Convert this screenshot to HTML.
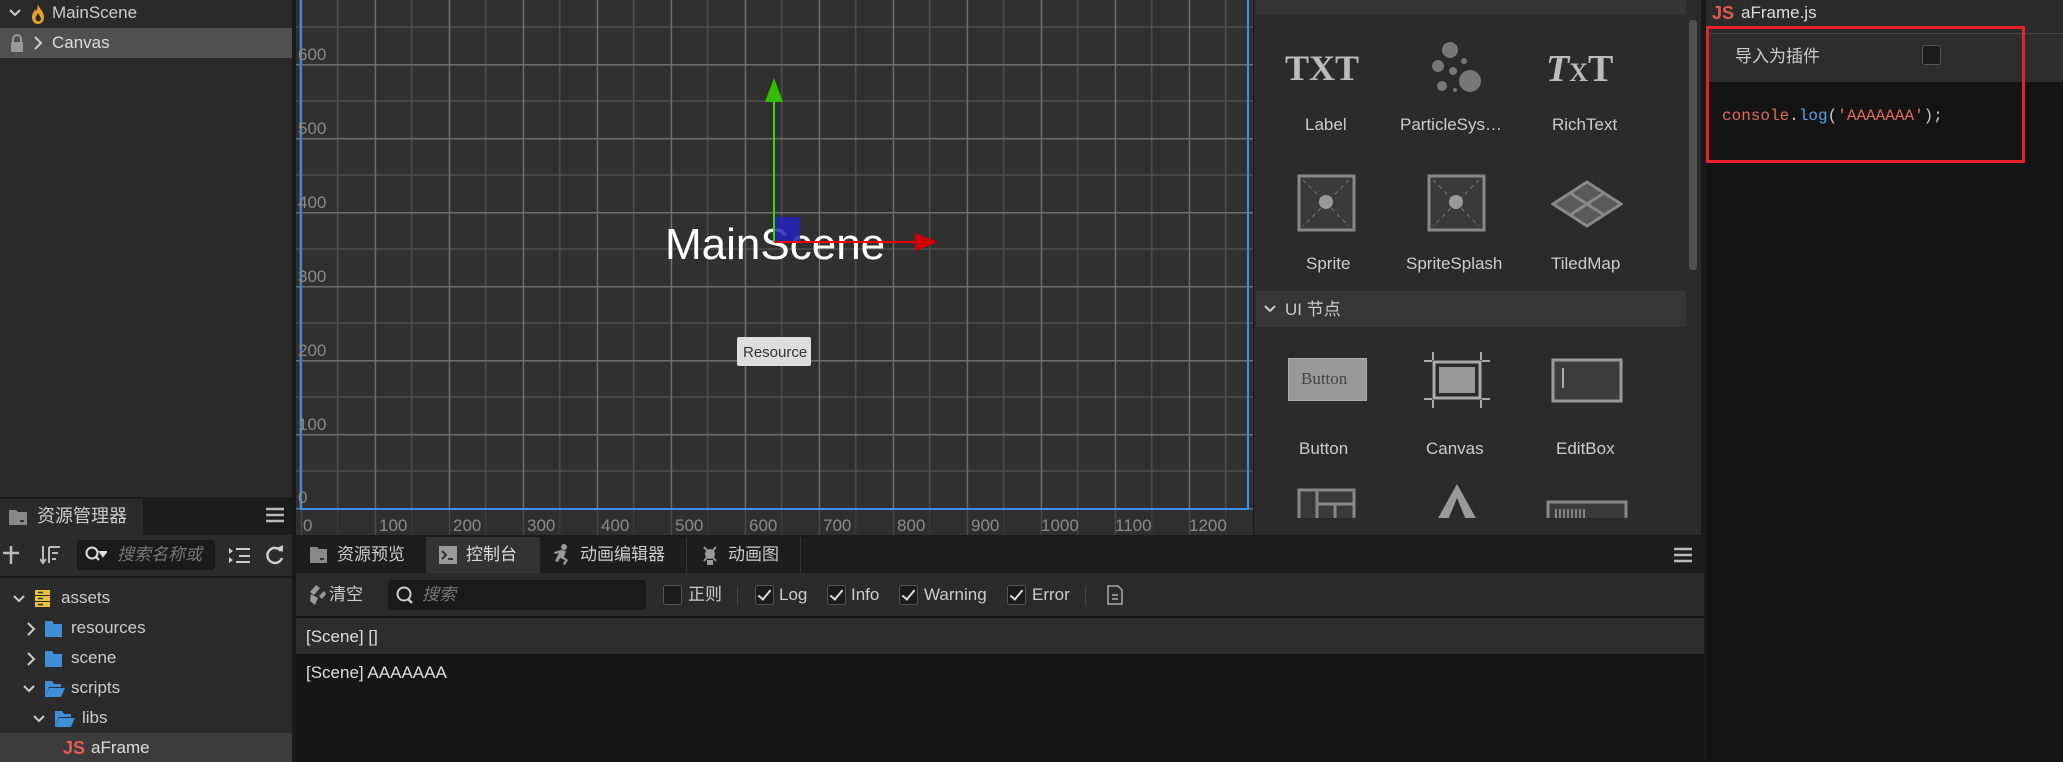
<!DOCTYPE html>
<html><head><meta charset="utf-8">
<style>
*{margin:0;padding:0;box-sizing:border-box}
body{width:2063px;height:762px;overflow:hidden;background:#1a1a1a;font-family:"Liberation Sans","Noto Sans CJK SC",sans-serif;color:#ccc;position:relative}
.a{position:absolute}
.t{position:absolute;white-space:nowrap;font-size:17px;line-height:1}
.cb{position:absolute;width:19px;height:20px;border:1px solid #555;border-radius:3px;background:#1b1b1b}
.ck::after{content:"";position:absolute;left:5px;top:1px;width:5px;height:11px;border:solid #ddd;border-width:0 2px 2px 0;transform:rotate(40deg)}
</style></head><body>

<!-- hierarchy -->
<div class="a" style="left:0;top:0;width:292px;height:497px;background:#2a2a2a"></div>
<svg class="a" style="left:8px;top:8px" width="14" height="10"><path d="M2 2 L7 7 L12 2" stroke="#ccc" stroke-width="2" fill="none"/></svg>
<svg class="a" style="left:30px;top:3px" width="16" height="22"><path d="M8 1 C9 6 14 8 14 14 C14 19 11 21 8 21 C5 21 2 19 2 14 C2 10 5 8 5 6 C6 9 7 9 8 1Z M8 10 C6 13 5 15 6 17 C7 19 10 19 11 16 C11 14 9 12 8 10Z" fill="#e8a22c" fill-rule="evenodd"/></svg>
<div class="t" style="left:52px;top:4px;color:#ccc">MainScene</div>
<div class="a" style="left:0;top:28px;width:292px;height:30px;background:#505050"></div>
<svg class="a" style="left:9px;top:34px" width="16" height="18"><path d="M4 8 V5 A4 4 0 0 1 12 5 V8" stroke="#999" stroke-width="2" fill="none"/><rect x="2" y="8" width="12" height="10" rx="1" fill="#999"/></svg>
<svg class="a" style="left:33px;top:35px" width="10" height="16"><path d="M2 2 L8 8 L2 14" stroke="#ccc" stroke-width="2" fill="none"/></svg>
<div class="t" style="left:52px;top:34px;color:#ddd">Canvas</div>

<!-- scene -->
<svg class="a" style="left:296px;top:0" width="957" height="535">
<defs>
<pattern id="g" patternUnits="userSpaceOnUse" x="4.7" y="508" width="74" height="74">
<rect width="74" height="74" fill="#303030"/>
<path d="M37 0V74M0 37H74" stroke="#4e4e4e" stroke-width="1.5"/>
<path d="M0.5 0V74M0 0.5H74" stroke="#6e6e6e" stroke-width="2"/>
</pattern>
</defs>
<rect width="957" height="535" fill="url(#g)"/>
<line x1="4.7" y1="0" x2="4.7" y2="510" stroke="#3b8fe6" stroke-width="2"/>
<line x1="4.7" y1="509" x2="952" y2="509" stroke="#3b8fe6" stroke-width="2"/>
<line x1="952" y1="0" x2="952" y2="510" stroke="#3b8fe6" stroke-width="2"/>
<rect x="0" y="510" width="957" height="25" fill="#2e2e2e" opacity="0.6"/>
<g fill="#8a8a8a" font-family="Liberation Sans" font-size="17">
<text x="2" y="60">600</text><text x="2" y="134">500</text><text x="2" y="208">400</text><text x="2" y="282">300</text><text x="2" y="356">200</text><text x="2" y="430">100</text><text x="2" y="503">0</text>
<text x="7" y="531">0</text><text x="83" y="531">100</text><text x="157" y="531">200</text><text x="231" y="531">300</text><text x="305" y="531">400</text><text x="379" y="531">500</text><text x="453" y="531">600</text><text x="527" y="531">700</text><text x="601" y="531">800</text><text x="675" y="531">900</text><text x="745" y="531">1000</text><text x="819" y="531">1100</text><text x="893" y="531">1200</text>
</g>
<text x="369" y="259" fill="#fff" font-family="Liberation Sans" font-size="44">MainScene</text>
<rect x="479" y="217" width="25" height="25" fill="#2222bb" opacity="0.85"/>
<line x1="478" y1="242" x2="478" y2="100" stroke="#33dd00" stroke-width="2"/>
<path d="M469 102 L478 78 L487 102Z" fill="#33bb00"/>
<line x1="478" y1="242" x2="622" y2="242" stroke="#ee0000" stroke-width="2"/>
<path d="M619 233 L642 242 L619 251Z" fill="#cc0000"/>
<rect x="441" y="337" width="74" height="29" rx="2" fill="#dddddd"/>
<text x="447" y="357" fill="#333" font-family="Liberation Sans" font-size="15">Resource</text>
</svg>

<!-- widgets panel -->
<div class="a" style="left:1254px;top:0;width:447px;height:535px;background:#2b2b2b"></div>
<div class="a" style="left:1256px;top:0;width:430px;height:14px;background:#353535"></div>
<div class="a" style="left:1689px;top:20px;width:8px;height:250px;background:#505050;border-radius:3px"></div>
<div class="t" style="left:1285px;top:50px;font-family:'Liberation Serif',serif;font-size:36px;font-weight:bold;color:#bbb">TXT</div>
<svg class="a" style="left:1420px;top:38px" width="70" height="60" fill="#777"><circle cx="30" cy="12" r="8"/><circle cx="18" cy="28" r="6"/><circle cx="33" cy="33" r="4"/><circle cx="44" cy="23" r="3"/><circle cx="50" cy="43" r="11"/><circle cx="22" cy="48" r="5"/><circle cx="35" cy="52" r="2"/></svg>
<div class="t" style="left:1546px;top:50px;font-family:'Liberation Serif',serif;font-size:38px;font-weight:bold;color:#bbb"><i>T</i><span style="font-size:26px">X</span>T</div>
<div class="t" style="left:1305px;top:116px">Label</div>
<div class="t" style="left:1400px;top:116px">ParticleSys…</div>
<div class="t" style="left:1552px;top:116px">RichText</div>
<svg class="a" style="left:1297px;top:174px" width="60" height="58"><rect x="2" y="2" width="55" height="54" fill="#3a3a3a" stroke="#888" stroke-width="3"/><path d="M6 6L52 52M52 6L6 52" stroke="#777" stroke-width="1" stroke-dasharray="4 4"/><circle cx="29" cy="28" r="7" fill="#999"/></svg>
<svg class="a" style="left:1427px;top:174px" width="60" height="58"><rect x="2" y="2" width="55" height="54" fill="#3a3a3a" stroke="#888" stroke-width="3"/><path d="M6 6L52 52M52 6L6 52" stroke="#777" stroke-width="1" stroke-dasharray="4 4"/><circle cx="29" cy="28" r="7" fill="#999"/></svg>
<svg class="a" style="left:1551px;top:180px" width="72" height="50"><path d="M36 2L70 24L36 46L2 24Z" fill="#5a5a5a" stroke="#888" stroke-width="3"/><path d="M19 13L53 35M53 13L19 35" stroke="#888" stroke-width="3"/></svg>
<div class="t" style="left:1306px;top:255px">Sprite</div>
<div class="t" style="left:1406px;top:255px">SpriteSplash</div>
<div class="t" style="left:1551px;top:255px">TiledMap</div>
<div class="a" style="left:1256px;top:291px;width:430px;height:36px;background:#363636"></div>
<svg class="a" style="left:1263px;top:304px" width="14" height="10"><path d="M2 2 L7 7 L12 2" stroke="#ccc" stroke-width="2" fill="none"/></svg>
<div class="t" style="left:1285px;top:301px">UI 节点</div>
<div class="a" style="left:1288px;top:358px;width:79px;height:43px;background:#999;border:1px solid #aaa"></div>
<div class="t" style="left:1301px;top:370px;font-family:'Liberation Serif',serif;font-size:17px;color:#444">Button</div>
<svg class="a" style="left:1424px;top:352px" width="66" height="56"><path d="M9 0V8M57 0V8M9 48V56M57 48V56M0 9H8M58 9H66M0 47H8M58 47H66" stroke="#aaa" stroke-width="2"/><rect x="10" y="10" width="46" height="36" fill="none" stroke="#aaa" stroke-width="3"/><rect x="15" y="15" width="36" height="26" fill="#9a9a9a"/></svg>
<svg class="a" style="left:1551px;top:358px" width="72" height="45"><rect x="2" y="2" width="68" height="41" fill="#3c3c3c" stroke="#999" stroke-width="3"/><path d="M12 10V30" stroke="#aaa" stroke-width="2"/></svg>
<div class="t" style="left:1299px;top:440px">Button</div>
<div class="t" style="left:1426px;top:440px">Canvas</div>
<div class="t" style="left:1556px;top:440px">EditBox</div>
<svg class="a" style="left:1297px;top:488px" width="60" height="30"><rect x="2" y="2" width="55" height="40" fill="#3a3a3a" stroke="#888" stroke-width="3"/><path d="M20 2V40M20 16H57M38 16V40" stroke="#888" stroke-width="3"/></svg>
<svg class="a" style="left:1432px;top:484px" width="50" height="34"><path d="M25 0L45 36H34L25 14L16 36H5Z" fill="#999"/></svg>
<svg class="a" style="left:1546px;top:500px" width="82" height="18"><rect x="2" y="2" width="78" height="30" fill="#3a3a3a" stroke="#888" stroke-width="3"/><path d="M10 9V18M14 9V18M18 9V18M22 9V18M26 9V18M30 9V18M34 9V18M38 9V18" stroke="#999" stroke-width="1.5"/></svg>

<!-- inspector -->
<div class="a" style="left:1706px;top:0;width:357px;height:762px;background:#141414"></div>
<div class="a" style="left:1706px;top:0;width:357px;height:33px;background:#2b2b2b"></div>
<div class="t" style="left:1712px;top:4px;color:#e25c50;font-weight:bold;font-size:18px">JS</div>
<div class="t" style="left:1741px;top:4px;color:#ddd">aFrame.js</div>
<div class="a" style="left:1706px;top:33px;width:357px;height:50px;background:#2d2d2d;border-top:1px solid #444;border-bottom:1px solid #111"></div>
<div class="t" style="left:1735px;top:48px">导入为插件</div>
<div class="cb" style="left:1922px;top:45px"></div>
<div class="t" style="left:1722px;top:108px;font-family:'Liberation Mono',monospace;font-size:16px"><span style="color:#e06a5c">console</span><span style="color:#ccc">.</span><span style="color:#5aa0e6">log</span><span style="color:#ccc">(</span><span style="color:#e06a5c">'AAAAAAA'</span><span style="color:#ccc">);</span></div>
<div class="a" style="left:1706px;top:26px;width:319px;height:137px;border:3px solid #e8202a"></div>

<!-- asset manager -->
<div class="a" style="left:0;top:497px;width:292px;height:38px;background:#1c1c1c"></div>
<div class="a" style="left:0;top:499px;width:143px;height:36px;background:#2b2b2b"></div>
<svg class="a" style="left:8px;top:508px" width="20" height="18"><path d="M1 2H8L10 4H19V17H1Z" fill="#888"/><rect x="12" y="12" width="4" height="2" fill="#333"/></svg>
<div class="t" style="left:37px;top:507px;font-size:18px">资源管理器</div>
<svg class="a" style="left:266px;top:507px" width="18" height="16"><path d="M0 2H18M0 8H18M0 14H18" stroke="#bbb" stroke-width="2.5"/></svg>
<div class="a" style="left:0;top:535px;width:292px;height:227px;background:#2b2b2b"></div>
<svg class="a" style="left:3px;top:545px" width="20" height="20"><path d="M8 1V19M0 8H16" stroke="#bbb" stroke-width="2.5"/></svg>
<svg class="a" style="left:40px;top:545px" width="22" height="20"><path d="M3 1V17M0 14L3 18L6 14M9 2H20M9 2V18M12 8H18M12 14H16" stroke="#bbb" stroke-width="2" fill="none"/></svg>
<div class="a" style="left:77px;top:540px;width:138px;height:30px;background:#1b1b1b;border-radius:3px"></div>
<svg class="a" style="left:85px;top:546px" width="22" height="18"><circle cx="7" cy="7" r="5.5" stroke="#ddd" stroke-width="2" fill="none"/><path d="M11 11L14 14M15 6H21L18 10Z" stroke="#ddd" stroke-width="2" fill="#ddd"/></svg>
<div class="t" style="left:117px;top:546px;color:#777;font-style:italic">搜索名称或</div>
<svg class="a" style="left:229px;top:545px" width="22" height="20"><path d="M0 3L4 6L0 9ZM0 12L4 15L0 18Z" fill="#ccc"/><path d="M7 4H21M10 11H21M7 17H21" stroke="#ccc" stroke-width="2"/></svg>
<svg class="a" style="left:265px;top:544px" width="20" height="22"><path d="M16 7A7.5 7.5 0 1 0 17 14" stroke="#ccc" stroke-width="2.5" fill="none"/><path d="M12 4L18 1L18 8Z" fill="#ccc"/></svg>
<div class="a" style="left:0;top:576px;width:292px;height:2px;background:#1c1c1c"></div>

<svg class="a" style="left:12px;top:594px" width="14" height="10"><path d="M2 2 L7 7 L12 2" stroke="#ccc" stroke-width="2" fill="none"/></svg>
<svg class="a" style="left:35px;top:590px" width="16" height="18"><rect x="0" y="0" width="15" height="5" fill="#e8c23c"/><rect x="0" y="6" width="15" height="5" fill="#e8c23c"/><rect x="0" y="12" width="15" height="5" fill="#e8c23c"/><path d="M3 2.5H8M3 8.5H8M3 14.5H8" stroke="#333" stroke-width="1.5"/></svg>
<div class="t" style="left:61px;top:589px">assets</div>
<svg class="a" style="left:26px;top:621px" width="10" height="16"><path d="M2 2 L8 8 L2 14" stroke="#ccc" stroke-width="2" fill="none"/></svg>
<svg class="a" style="left:45px;top:621px" width="18" height="16"><path d="M0 0H7L9 3H17V16H0Z" fill="#3f8fd8"/></svg>
<div class="t" style="left:71px;top:619px">resources</div>
<svg class="a" style="left:26px;top:651px" width="10" height="16"><path d="M2 2 L8 8 L2 14" stroke="#ccc" stroke-width="2" fill="none"/></svg>
<svg class="a" style="left:45px;top:651px" width="18" height="16"><path d="M0 0H7L9 3H17V16H0Z" fill="#3f8fd8"/></svg>
<div class="t" style="left:71px;top:649px">scene</div>
<svg class="a" style="left:22px;top:684px" width="14" height="10"><path d="M2 2 L7 7 L12 2" stroke="#ccc" stroke-width="2" fill="none"/></svg>
<svg class="a" style="left:45px;top:681px" width="20" height="16"><path d="M0 0H7L9 3H16V6H4L0 16Z" fill="#3f8fd8"/><path d="M4 7H20L16 16H0Z" fill="#3f8fd8"/></svg>
<div class="t" style="left:71px;top:679px">scripts</div>
<svg class="a" style="left:32px;top:714px" width="14" height="10"><path d="M2 2 L7 7 L12 2" stroke="#ccc" stroke-width="2" fill="none"/></svg>
<svg class="a" style="left:55px;top:711px" width="20" height="16"><path d="M0 0H7L9 3H16V6H4L0 16Z" fill="#3f8fd8"/><path d="M4 7H20L16 16H0Z" fill="#3f8fd8"/></svg>
<div class="t" style="left:82px;top:709px">libs</div>
<div class="a" style="left:0;top:733px;width:292px;height:29px;background:#3c3c3c"></div>
<div class="t" style="left:63px;top:739px;color:#e25c50;font-weight:bold;font-size:18px">JS</div>
<div class="t" style="left:91px;top:739px;color:#ddd">aFrame</div>

<!-- bottom console -->
<div class="a" style="left:296px;top:537px;width:1408px;height:36px;background:#1d1d1d"></div>
<div class="a" style="left:426px;top:537px;width:113px;height:36px;background:#333"></div>
<div class="a" style="left:539px;top:537px;width:1px;height:36px;background:#333"></div>
<div class="a" style="left:686px;top:537px;width:1px;height:36px;background:#333"></div>
<div class="a" style="left:800px;top:537px;width:1px;height:36px;background:#333"></div>
<svg class="a" style="left:310px;top:546px" width="18" height="18"><path d="M0 1H7L9 3H17V17H0Z" fill="#888"/><rect x="10" y="12" width="4" height="2" fill="#333"/></svg>
<div class="t" style="left:337px;top:546px">资源预览</div>
<svg class="a" style="left:439px;top:546px" width="18" height="18"><rect width="18" height="18" fill="#999"/><path d="M3 5L7 9L3 13M9 13H14" stroke="#333" stroke-width="2" fill="none"/></svg>
<div class="t" style="left:466px;top:546px;color:#ddd">控制台</div>
<svg class="a" style="left:553px;top:544px" width="18" height="22" fill="#999"><circle cx="11" cy="3" r="3"/><path d="M8 6L13 7L11 13L15 16L12 21L10 20L12 16L7 14L5 18L2 17L6 9L2 10L1 8Z"/></svg>
<div class="t" style="left:580px;top:546px">动画编辑器</div>
<svg class="a" style="left:701px;top:545px" width="18" height="20" fill="#999"><circle cx="9" cy="9" r="5"/><path d="M3 2L15 16M15 2L3 16" stroke="#999" stroke-width="2"/><rect x="6" y="15" width="6" height="5"/></svg>
<div class="t" style="left:728px;top:546px">动画图</div>
<svg class="a" style="left:1674px;top:547px" width="18" height="16"><path d="M0 2H18M0 8H18M0 14H18" stroke="#bbb" stroke-width="2.5"/></svg>
<div class="a" style="left:296px;top:573px;width:1408px;height:43px;background:#2b2b2b"></div>
<svg class="a" style="left:310px;top:585px" width="16" height="20" fill="#999"><path d="M6 0L10 3L4 10L0 7Z M1 9L8 13L5 20L0 16Z M9 11L14 6L16 9L12 14Z"/></svg>
<div class="t" style="left:329px;top:586px">清空</div>
<div class="a" style="left:388px;top:580px;width:258px;height:30px;background:#1a1a1a;border-radius:3px"></div>
<svg class="a" style="left:396px;top:586px" width="18" height="19"><circle cx="8" cy="8" r="6.5" stroke="#ccc" stroke-width="2" fill="none"/><path d="M12 13L16 17" stroke="#ccc" stroke-width="2.5"/></svg>
<div class="t" style="left:422px;top:586px;color:#777;font-style:italic">搜索</div>
<div class="cb" style="left:663px;top:585px"></div>
<div class="t" style="left:688px;top:586px">正则</div>
<div class="a" style="left:737px;top:586px;width:1px;height:20px;background:#444"></div>
<div class="cb ck" style="left:755px;top:585px"></div>
<div class="t" style="left:779px;top:586px">Log</div>
<div class="cb ck" style="left:827px;top:585px"></div>
<div class="t" style="left:851px;top:586px">Info</div>
<div class="cb ck" style="left:899px;top:585px"></div>
<div class="t" style="left:924px;top:586px">Warning</div>
<div class="cb ck" style="left:1007px;top:585px"></div>
<div class="t" style="left:1032px;top:586px">Error</div>
<div class="a" style="left:1085px;top:586px;width:1px;height:20px;background:#444"></div>
<svg class="a" style="left:1107px;top:585px" width="16" height="20"><path d="M1 1H11L15 5V19H1Z" stroke="#aaa" stroke-width="1.5" fill="none"/><path d="M5 10H11M5 14H11" stroke="#aaa" stroke-width="1.5"/></svg>
<div class="a" style="left:296px;top:616px;width:1408px;height:146px;background:#161616"></div>
<div class="a" style="left:296px;top:618px;width:1408px;height:36px;background:#2d2d2d"></div>
<div class="t" style="left:306px;top:628px;color:#ddd">[Scene] []</div>
<div class="t" style="left:306px;top:664px;color:#ddd">[Scene] AAAAAAA</div>
</body></html>
